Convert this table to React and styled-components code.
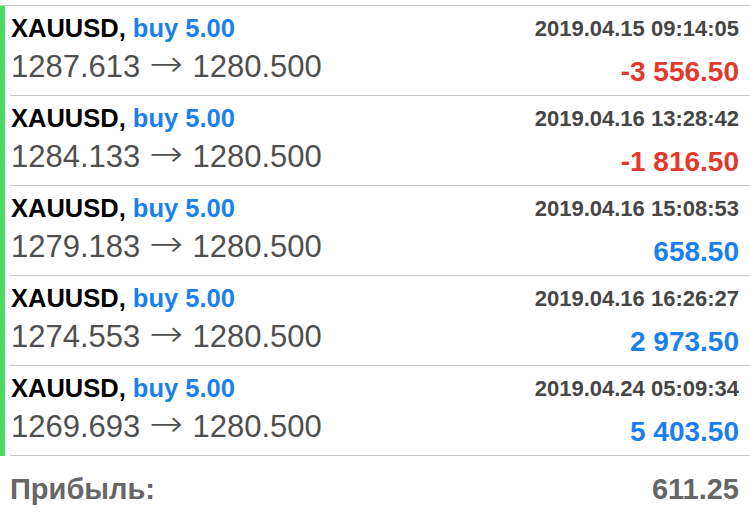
import styled, { createGlobalStyle } from "styled-components";

const GlobalStyle = createGlobalStyle`
  html, body {
    margin: 0;
    padding: 0;
    background: #fff;
  }
`;

const Page = styled.div`
  width: 750px;
  height: 517px;
  overflow: hidden;
  padding-top: 5px;
  box-sizing: border-box;
  background: #fff;
  font-family: "Liberation Sans", Arial, sans-serif;
`;

const List = styled.div`
  border-top: 1px solid #c8c8cc;
  display: flex;
  flex-direction: column;
`;

const Row = styled.div`
  display: flex;
  height: 90px;
`;

const Marker = styled.div`
  width: 5px;
  flex: none;
  background: #4cd964;
`;

const Content = styled.div`
  flex: 1;
  margin-left: 5px;
  padding: 0 11px 0 1px;
  box-sizing: border-box;
  border-bottom: 1px solid #c8c8cc;
  display: flex;
  justify-content: space-between;
  align-items: flex-start;
`;

const Column = styled.div`
  display: flex;
  flex-direction: column;
  align-items: ${(p) => (p.$right ? "flex-end" : "flex-start")};
  padding-top: ${(p) => (p.$right ? "8px" : "7px")};
`;

const Title = styled.div`
  font-weight: 700;
  font-size: 25.5px;
  line-height: 30px;
  color: #000;
  white-space: nowrap;
`;

const Volume = styled.span`
  color: #1a7ff0;
`;

const Prices = styled.div`
  margin-top: 5px;
  font-size: 31px;
  line-height: 34px;
  color: #4f4f4f;
  white-space: nowrap;
  display: flex;
  align-items: baseline;
`;

const Arrow = styled.span`
  font-family: "DejaVu Sans", sans-serif;
  font-weight: 200;
  font-size: 36px;
  margin: 0 11px 0 11px;
  transform: scaleX(1.12) translateY(-1px);
  display: inline-block;
`;

const Time = styled.div`
  font-weight: 700;
  font-size: 22px;
  line-height: 30px;
  color: #464646;
  white-space: nowrap;
`;

const Profit = styled.div`
  margin-top: 11px;
  font-weight: 700;
  font-size: 28px;
  line-height: 34px;
  white-space: nowrap;
  color: ${(p) => (p.$loss ? "#e2392b" : "#1a7ff0")};
`;

const Footer = styled.div`
  display: flex;
  justify-content: space-between;
  padding: 16px 11px 0 10px;
  font-weight: 700;
  font-size: 29px;
  line-height: 34px;
  color: #666;
`;

const deals = [
  { time: "2019.04.15 09:14:05", open: "1287.613", profit: "-3 556.50" },
  { time: "2019.04.16 13:28:42", open: "1284.133", profit: "-1 816.50" },
  { time: "2019.04.16 15:08:53", open: "1279.183", profit: "658.50" },
  { time: "2019.04.16 16:26:27", open: "1274.553", profit: "2 973.50" },
  { time: "2019.04.24 05:09:34", open: "1269.693", profit: "5 403.50" },
];

export default function App() {
  return (
    <>
      <GlobalStyle />
      <Page>
        <List>
          {deals.map((d) => (
            <Row key={d.time}>
              <Marker />
              <Content>
                <Column>
                  <Title>
                    XAUUSD, <Volume>buy 5.00</Volume>
                  </Title>
                  <Prices>
                    {d.open}
                    <Arrow>→</Arrow>
                    1280.500
                  </Prices>
                </Column>
                <Column $right>
                  <Time>{d.time}</Time>
                  <Profit $loss={d.profit.startsWith("-")}>{d.profit}</Profit>
                </Column>
              </Content>
            </Row>
          ))}
        </List>
        <Footer>
          <span>Прибыль:</span>
          <span>611.25</span>
        </Footer>
      </Page>
    </>
  );
}
